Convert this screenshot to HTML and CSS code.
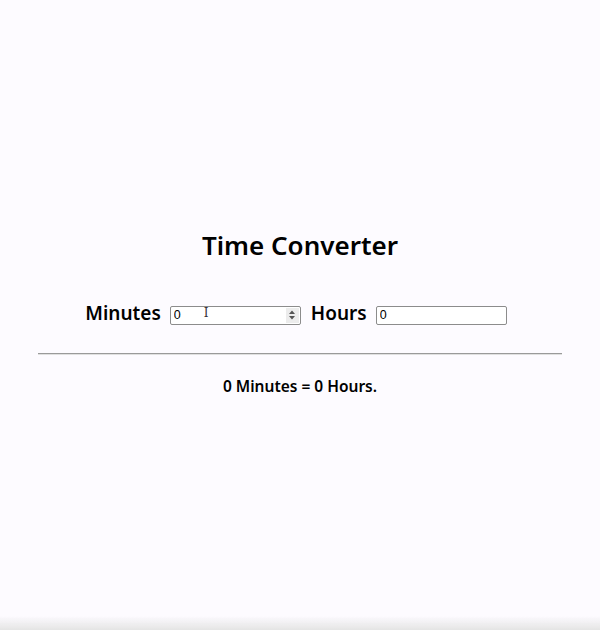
FILE: index.html
```html
<!DOCTYPE html>
<html>
<head>
<meta charset="utf-8">
<link rel="stylesheet" href="styles.css">
</head>
<body>
<div class="page">
  <h1 class="title">Time Converter</h1>
  <div class="row">
    <label class="label" for="min">Minutes</label>
    <div class="num-wrap">
      <input id="min" class="field field-num" type="text" value="0">
      <span class="spin"><svg width="8" height="12" viewBox="0 0 8 12"><path d="M4 1.5 L7 5 L1 5 Z M4 10.5 L7 7 L1 7 Z" fill="#555"/></svg></span>
      <span class="cursor">I</span>
    </div>
    <label class="label" for="hr">Hours</label>
    <input id="hr" class="field" type="text" value="0">
  </div>
  <hr class="rule">
  <p class="result">0 Minutes = 0 Hours.</p>
</div>
<div class="shade"></div>
</body>
</html>
```
FILE: styles.css
```css
html, body {
  margin: 0;
  padding: 0;
  height: 100%;
  background: #fdfbff;
}
body {
  font-family: "Noto Sans", "Open Sans", sans-serif;
  color: #000;
  overflow: hidden;
}
.page {
  padding: 226px 38px 0;
  display: flex;
  flex-direction: column;
  align-items: stretch;
}
.title {
  margin: 0;
  text-align: center;
  font-size: 26px;
  font-weight: 600;
  line-height: 38px;
}
.row {
  margin-top: 30px;
  padding-right: 8px;
  display: flex;
  justify-content: center;
  align-items: center;
  height: 38px;
}
.label {
  font-size: 19px;
  font-weight: 600;
  margin-right: 9px;
}
.num-wrap + .label {
  margin-left: 10px;
}
.num-wrap {
  position: relative;
  display: flex;
  margin-top: 4px;
}
.field {
  box-sizing: border-box;
  width: 131px;
  height: 19px;
  border: 1px solid #8c8c8c;
  border-radius: 2px;
  padding: 0 3px;
  font-family: "Liberation Sans", Arial, sans-serif;
  font-size: 12.5px;
  background: #fff;
  color: #000;
  outline: none;
}
#hr {
  margin-top: 4px;
  width: 131px;
}
.field-num {
  padding-right: 18px;
}
.spin {
  position: absolute;
  right: 2px;
  top: 2px;
  bottom: 2px;
  width: 13px;
  background: #ececec;
  display: flex;
  align-items: center;
  justify-content: center;
}
.cursor {
  position: absolute;
  left: 34px;
  top: 0;
  font-family: "DejaVu Serif", serif;
  font-size: 12px;
  color: #333;
}
.rule {
  margin: 21px 0 0;
  border: 0;
  border-top: 1px solid #9a9a9a;
  border-bottom: 1px solid #e0e0e0;
  height: 0;
}
.result {
  margin: 20px 0 0;
  text-align: center;
  font-size: 15.5px;
  font-weight: 600;
}
.shade {
  position: fixed;
  left: 0;
  right: 0;
  bottom: 0;
  height: 14px;
  background: linear-gradient(to bottom, rgba(229,229,229,0), #e4e4e4);
}
```
